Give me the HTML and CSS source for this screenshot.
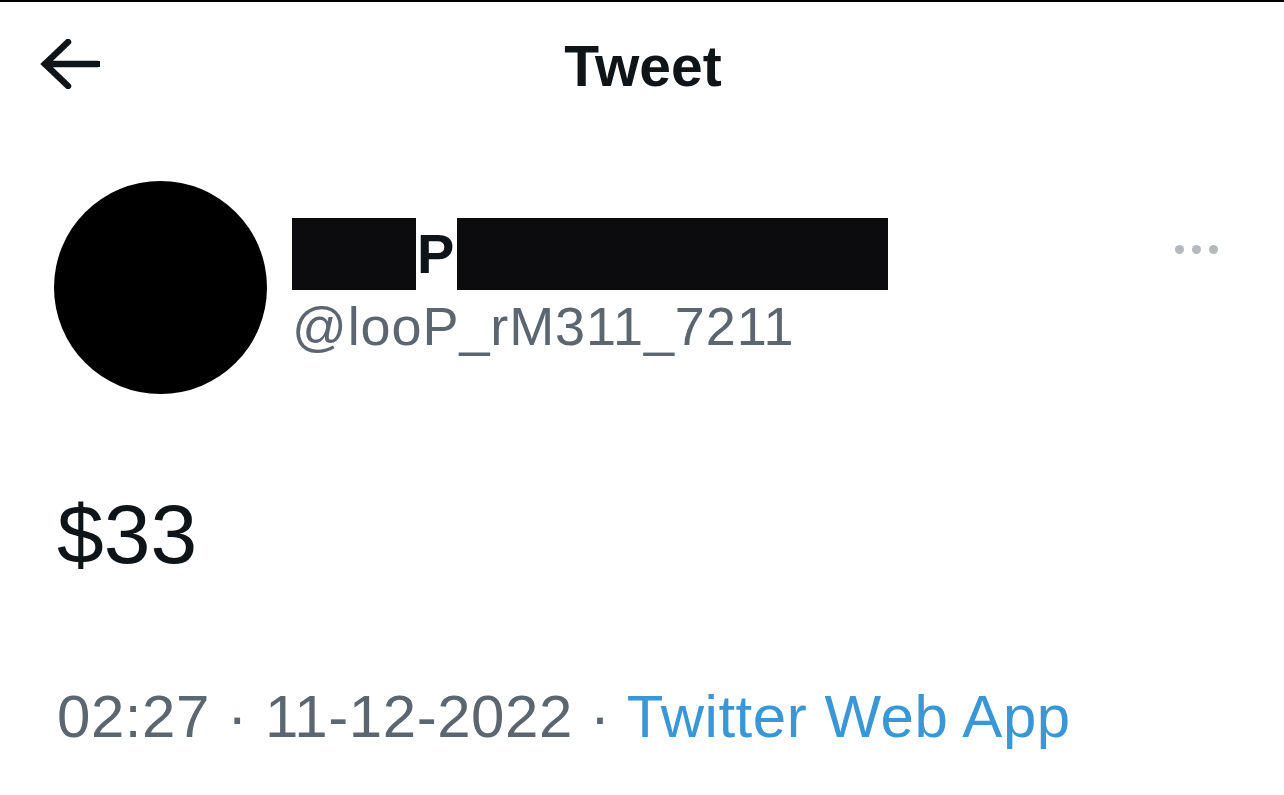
FILE: index.html
```html
<!DOCTYPE html>
<html lang="en">
<head>
    <meta charset="UTF-8">
    <meta name="viewport" content="width=device-width, initial-scale=1.0">
    <title>Tweet</title>
    <link rel="stylesheet" href="styles.css">
</head>
<body>
    <div class="page">
        <div class="header">
            <button class="back" aria-label="Back">
                <svg width="60" height="50" viewBox="0 0 60 50">
                    <path d="M5 25 H58 M28 3 L5 25 L28 47" fill="none" stroke="#0f1419" stroke-width="6.5" stroke-linecap="round" stroke-linejoin="miter"/>
                </svg>
            </button>
            <h1 class="title">Tweet</h1>
            <div></div>
        </div>

        <div class="tweet">
            <div class="author">
                <div class="avatar"></div>
                <div class="names">
                    <div class="name">
                        <span class="redact redact-a"></span>
                        <span class="letter">P</span>
                        <span class="redact redact-b"></span>
                    </div>
                    <div class="handle">@looP_rM311_7211</div>
                </div>
                <div class="more">
                    <span></span><span></span><span></span>
                </div>
            </div>

            <p class="text">$33</p>

            <div class="meta">
                <span>02:27</span> · <span>11-12-2022</span> · <span class="source">Twitter Web App</span>
            </div>
        </div>
    </div>
</body>
</html>
```

FILE: styles.css
```css
body {
    margin: 0;
    padding: 0;
    background-color: #fff;
    font-family: "Liberation Sans", Arial, sans-serif;
    color: #0f1419;
}

.page {
    border-top: 2px solid #000;
    height: 793px;
    overflow: hidden;
}

.header {
    display: grid;
    grid-template-columns: 1fr auto 1fr;
    align-items: center;
    height: 124px;
    padding-left: 40px;
    padding-right: 40px;
}

.back {
    background: none;
    border: none;
    padding: 0;
    width: 60px;
    height: 50px;
    cursor: pointer;
}

.back svg {
    display: block;
}

.title {
    margin: 4px 0 0 2px;
    font-size: 57px;
    line-height: 1;
    font-weight: bold;
}

.tweet {
    padding: 0 66px 0 54px;
}

.author {
    display: flex;
    align-items: flex-start;
    margin-top: 55px;
}

.avatar {
    width: 213px;
    height: 213px;
    border-radius: 50%;
    background-color: #000;
    flex-shrink: 0;
}

.names {
    flex: 1;
    padding-top: 37px;
    padding-left: 25px;
}

.name {
    display: flex;
    height: 72px;
}

.redact {
    display: block;
    height: 72px;
    background-color: #0c0c0f;
}

.redact-a {
    width: 124px;
}

.redact-b {
    width: 431px;
    margin-left: 3px;
}

.letter {
    font-size: 56px;
    font-weight: bold;
    line-height: 72px;
    margin-left: 1px;
}

.handle {
    margin-top: 6px;
    font-size: 54px;
    line-height: 60px;
    letter-spacing: 0.9px;
    color: #5b6670;
}

.more {
    display: flex;
    gap: 8px;
    margin-top: 64px;
}

.more span {
    width: 9px;
    height: 9px;
    border-radius: 50%;
    background-color: #b4b9bd;
}

.text {
    margin: 90px 0 0 3px;
    font-size: 84px;
    line-height: 1.2;
}

.meta {
    margin: 96px 0 0 3px;
    font-size: 60px;
    line-height: 1.2;
    letter-spacing: 0.55px;
    color: #5b6670;
    white-space: nowrap;
}

.source {
    color: #3a97d6;
}
```
